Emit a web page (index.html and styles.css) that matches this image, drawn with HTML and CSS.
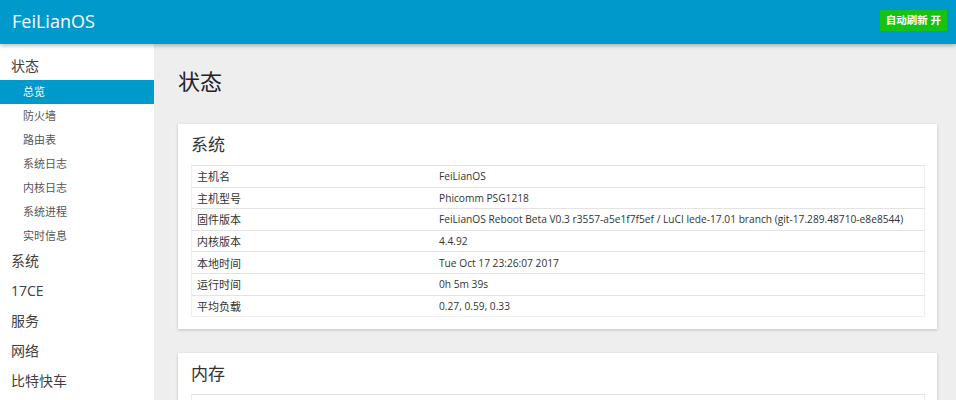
FILE: index.html
```html
<!DOCTYPE html>
<html>
<head>
<meta charset="utf-8">
<meta name="viewport" content="width=device-width, initial-scale=1">
<link rel="stylesheet" href="styles.css">
</head>
<body>

<header class="header">
  <span class="brand">FeiLianOS</span>
  <span class="refresh">自动刷新 开</span>
</header>

<div class="page">
  <div class="sidebar">
    <div class="menu">状态</div>
    <ul class="submenu">
      <li class="active">总览</li>
      <li>防火墙</li>
      <li>路由表</li>
      <li>系统日志</li>
      <li>内核日志</li>
      <li>系统进程</li>
      <li>实时信息</li>
    </ul>
    <div class="menu">系统</div>
    <div class="menu">17CE</div>
    <div class="menu">服务</div>
    <div class="menu">网络</div>
    <div class="menu">比特快车</div>
  </div>

  <div class="main">
    <h2>状态</h2>

    <div class="card">
      <h3>系统</h3>
      <table class="info">
        <tr><td>主机名</td><td>FeiLianOS</td></tr>
        <tr><td>主机型号</td><td>Phicomm PSG1218</td></tr>
        <tr><td>固件版本</td><td>FeiLianOS Reboot Beta V0.3 r3557-a5e1f7f5ef / LuCI lede-17.01 branch (git-17.289.48710-e8e8544)</td></tr>
        <tr><td>内核版本</td><td>4.4.92</td></tr>
        <tr><td>本地时间</td><td>Tue Oct 17 23:26:07 2017</td></tr>
        <tr><td>运行时间</td><td>0h 5m 39s</td></tr>
        <tr><td>平均负载</td><td>0.27, 0.59, 0.33</td></tr>
      </table>
    </div>

    <div class="card">
      <h3>内存</h3>
      <table class="info">
        <tr><td></td><td></td></tr>
      </table>
    </div>
  </div>
</div>

</body>
</html>
```

FILE: styles.css
```css
html, body {
  margin: 0;
  padding: 0;
}

body {
  font-family: "Open Sans", "Noto Sans CJK SC", sans-serif;
  color: #404040;
  background: #eeeeee;
  height: 400px;
  overflow: hidden;
}

.header {
  position: relative;
  z-index: 2;
  height: 44px;
  background: #0099cc;
  box-shadow: 0 2px 4px rgba(0,0,0,0.25);
  display: flex;
  align-items: center;
  justify-content: space-between;
  padding: 0 9px 0 12px;
}

.brand {
  color: #fff;
  font-size: 18px;
  margin-top: -3px;
}

.refresh {
  background: #17c217;
  color: #fff;
  font-size: 10.5px;
  font-weight: bold;
  padding: 3px 6px 4px 6px;
  margin-top: -4px;
  line-height: 14px;
}

.page {
  display: flex;
}

.sidebar {
  width: 154px;
  flex: none;
  background: #fff;
  height: 356px;
  padding-top: 7px;
  box-sizing: border-box;
}

.menu {
  font-size: 14px;
  line-height: 30px;
  padding-left: 11px;
  color: #404040;
}

.submenu {
  list-style: none;
  margin: -1px 0 -2px 0;
  padding: 0;
}

.submenu li {
  font-size: 11px;
  line-height: 24px;
  height: 24px;
  padding-left: 23px;
  color: #555;
}

.submenu li.active {
  background: #0099cc;
  color: #fff;
}

.main {
  flex: 1;
  padding: 0 19px 0 24px;
}

.main h2 {
  font-size: 22px;
  font-weight: normal;
  color: #222;
  margin: 22px 0 28px 0;
  line-height: 30px;
}

.card {
  background: #fff;
  box-shadow: 0 1px 3px rgba(0,0,0,0.2);
  padding: 8px 12px 12px 13px;
  margin-bottom: 24px;
}

.card h3 {
  font-size: 17px;
  font-weight: normal;
  color: #333;
  margin: 0 0 7px 0;
  line-height: 26px;
}

.info {
  width: 100%;
  table-layout: fixed;
  border-collapse: collapse;
  border: 1px solid #eee;
  font-size: 10.2px;
  color: #333;
}

.info td {
  border-top: 1px solid #e3e3e3;
  height: 20.6px;
  padding: 0 5px;
  white-space: nowrap;
}

.info td:first-child {
  width: 232px;
  font-size: 11px;
}
```
